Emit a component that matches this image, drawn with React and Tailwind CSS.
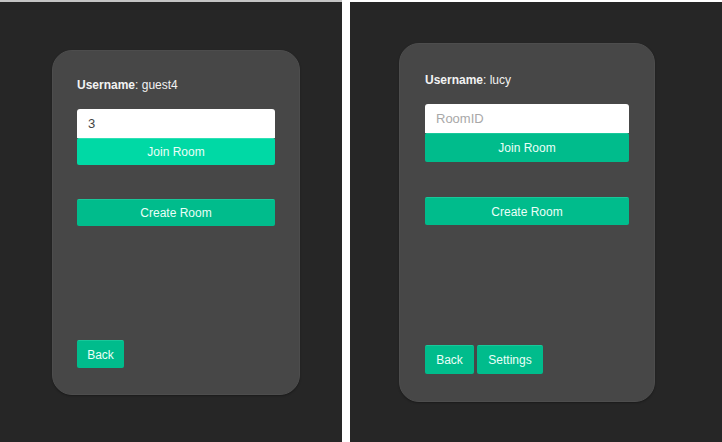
import React from 'react';

const font = { fontFamily: '"Liberation Sans", Arial, sans-serif' };

const LobbyCard = ({ username, roomId, hoverJoin, showSettings, className }) => {
  return (
    <div
      className={`flex flex-col rounded-[20px] bg-[#474747] border border-[#4d4d4d] shadow-[0_1px_2px_rgba(0,0,0,0.3)] ${className}`}
    >
      <p className="text-[12px] leading-4 text-[#f2f2f2]">
        <span className="font-bold">Username</span>: {username}
      </p>
      <input
        type="text"
        readOnly
        value={roomId}
        placeholder="RoomID"
        className="mt-4 w-full h-[29px] bg-white rounded-t-[3px] px-[11px] text-[13px] text-[#444] placeholder:text-[#a8a8a8] outline-none"
      />
      {hoverJoin ? (
        <button className="w-full h-[27px] rounded-[2px] bg-[#00d9a5] border-t border-[#2ee0b4] text-[12px] text-[#eafff8]">
          Join Room
        </button>
      ) : (
        <button className="w-full h-[29px] rounded-[2px] bg-[#00bc8c] border-t border-[#18c89a] text-[12px] text-[#eafff8]">
          Join Room
        </button>
      )}
      <button
        className={`w-full rounded-[2px] bg-[#00bc8c] border-t border-[#18c89a] text-[12px] text-[#eafff8] ${
          hoverJoin ? 'mt-[34px] h-[27px]' : 'mt-[35px] h-[28px]'
        }`}
      >
        Create Room
      </button>
      <div className="mt-auto flex gap-[3px]">
        <button
          className={`rounded-[2px] bg-[#00bc8c] border-t border-[#18c89a] text-[12px] text-[#eafff8] ${
            hoverJoin ? 'h-[28px] w-[47px]' : 'h-[29px] w-[49px]'
          }`}
        >
          Back
        </button>
        {showSettings ? (
          <button className="h-[29px] w-[66px] rounded-[2px] bg-[#00bc8c] border-t border-[#18c89a] text-[12px] text-[#eafff8]">
            Settings
          </button>
        ) : (
          ''
        )}
      </div>
    </div>
  );
};

export default function App() {
  return (
    <div className="flex w-[722px] h-[442px] bg-white overflow-hidden" style={font}>
      <div className="w-[342px] h-full bg-[#262626] border-t-2 border-[#c4c4c4] pt-[48px]">
        <LobbyCard
          username="guest4"
          roomId="3"
          hoverJoin
          className="ml-[52px] w-[248px] h-[345px] pt-[26px] pb-[26px] px-[24px]"
        />
      </div>
      <div className="ml-[8px] flex-1 mt-[2px] bg-[#262626] pt-[41px]">
        <LobbyCard
          username="lucy"
          roomId=""
          showSettings
          className="ml-[49px] w-[256px] h-[359px] pt-[28px] pb-[27px] px-[25px]"
        />
      </div>
    </div>
  );
}
